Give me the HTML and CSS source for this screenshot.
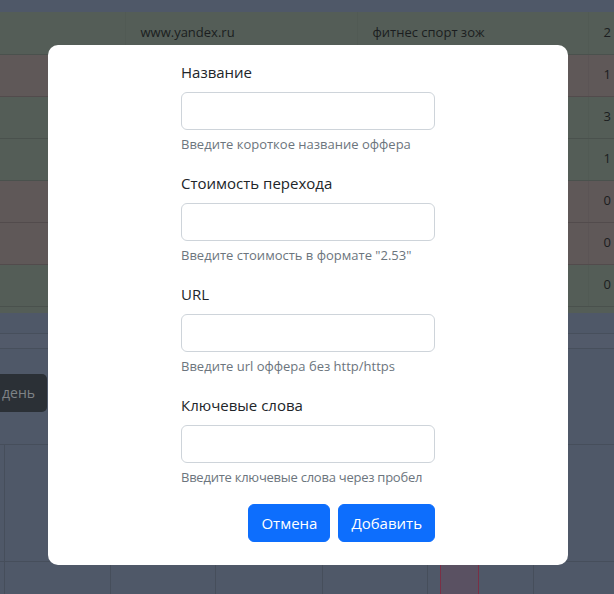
FILE: index.html
```html
<!DOCTYPE html>
<html lang="ru">
<head>
<meta charset="utf-8">
<title>Офферы</title>
<link rel="stylesheet" href="styles.css">
</head>
<body>
<div class="page">
  <div class="top-gap"></div>
  <table class="offers">
    <colgroup>
      <col class="c1"><col class="c2"><col class="c3"><col class="c4">
    </colgroup>
    <tbody>
      <tr class="ok"><td></td><td>www.yandex.ru</td><td>фитнес спорт зож</td><td>2</td></tr>
      <tr class="bad"><td></td><td></td><td></td><td>1</td></tr>
      <tr class="ok"><td></td><td></td><td></td><td>3</td></tr>
      <tr class="ok"><td></td><td></td><td></td><td>1</td></tr>
      <tr class="bad"><td></td><td></td><td></td><td>0</td></tr>
      <tr class="bad"><td></td><td></td><td></td><td>0</td></tr>
      <tr class="ok"><td></td><td></td><td></td><td>0</td></tr>
    </tbody>
  </table>
  <div class="foot-strip"></div>
  <div class="band-gap"></div>
  <div class="tabs-band"></div>
  <div class="toolbar"><button class="btn-dark" type="button">день</button></div>
  <div class="calendar">
    <div class="cal-cell"></div><div class="cal-cell"></div><div class="cal-cell"></div><div class="cal-cell"></div>
    <div class="cal-cell"></div><div class="cal-cell"></div><div class="cal-cell"></div>
    <div class="cal-cell"></div><div class="cal-cell"></div><div class="cal-cell"></div><div class="cal-cell"></div>
    <div class="cal-cell"></div><div class="cal-cell event-cell"><div class="event"></div></div><div class="cal-cell"></div>
  </div>
</div>

<div class="modal-wrap">
  <div class="modal">
    <form class="offer-form">
      <div class="field">
        <label class="field-label" for="f-name">Название</label>
        <input class="field-input" id="f-name" type="text">
        <div class="field-help">Введите короткое название оффера</div>
      </div>
      <div class="field">
        <label class="field-label" for="f-cost">Стоимость перехода</label>
        <input class="field-input" id="f-cost" type="text">
        <div class="field-help">Введите стоимость в формате "2.53"</div>
      </div>
      <div class="field">
        <label class="field-label" for="f-url">URL</label>
        <input class="field-input" id="f-url" type="text">
        <div class="field-help">Введите url оффера без http/https</div>
      </div>
      <div class="field">
        <label class="field-label" for="f-kw">Ключевые слова</label>
        <input class="field-input" id="f-kw" type="text">
        <div class="field-help field-help-tight">Введите ключевые слова через пробел</div>
      </div>
      <div class="actions">
        <button class="btn-primary" type="button">Отмена</button>
        <button class="btn-primary" type="submit">Добавить</button>
      </div>
    </form>
  </div>
</div>
</body>
</html>
```

FILE: styles.css
```css
* { box-sizing: border-box; }

html, body {
  margin: 0;
  padding: 0;
  height: 100%;
  overflow: hidden;
}

body {
  background: #4f5868;
  font-family: "Open Sans", "Noto Sans", sans-serif;
  font-size: 15px;
  line-height: 1.5;
  color: #212529;
}

.page {
  width: 640px;
}

.top-gap { height: 12px; }

.offers {
  width: 640px;
  border-collapse: collapse;
  table-layout: fixed;
  font-size: 13px;
  color: #1b1d20;
}
.offers .c1 { width: 125px; }
.offers .c2 { width: 232px; }
.offers .c3 { width: 231px; }
.offers .c4 { width: 52px; }

.offers td {
  height: 42px;
  padding: 0 15px;
  border-bottom: 1px solid #4a514d;
  vertical-align: middle;
  white-space: nowrap;
}
.offers tr.ok td { background: #545d57; }
.offers tr.ok td + td { border-left: 1px solid #515a54; }
.offers tr.bad td { background: #5f5858; border-bottom-color: #524b4c; }
.offers tr.bad td + td { border-left: 1px solid #5b5455; }

.foot-strip {
  height: 6px;
  background: #545d57;
}

.band-gap { height: 20px; }

.tabs-band {
  height: 16px;
  background: #525a6a;
  border-top: 1px solid #474f5c;
  border-bottom: 1px solid #474f5c;
}

.toolbar {
  display: flex;
  padding-top: 25px;
  height: 95px;
}

.btn-dark {
  height: 38px;
  padding: 0 12px 0 2px;
  border: 0;
  border-radius: 0 5px 5px 0;
  background: #2b3036;
  color: #7f8387;
  font-family: inherit;
  font-size: 14px;
}

.calendar {
  display: grid;
  width: 640px;
  grid-template-columns: 4px 106px 105px 107px 105px 106px 107px;
  grid-auto-rows: 117px;
  border-top: 1px solid #464e5b;
}

.cal-cell {
  border-left: 1px solid #464e5b;
  border-bottom: 1px solid #464e5b;
}
.calendar > .cal-cell:nth-child(7n+1) { border-left: 0; }

.event-cell {
  display: flex;
  padding-left: 12px;
}
.event {
  width: 39px;
  background: #5a5162;
  border-left: 1px solid #7a2f45;
  border-right: 1px solid #7a2f45;
}

/* modal */
.modal-wrap {
  position: fixed;
  inset: 0;
  padding: 45px 0 0 48px;
}

.modal {
  width: 520px;
  height: 520px;
  background: #fff;
  border-radius: 10px;
  padding: 15px 0 0;
  display: flex;
  justify-content: center;
}

.offer-form {
  width: 254px;
}

.field { margin-bottom: 16px; }

.field-label {
  display: block;
  margin-bottom: 8px;
  line-height: 24px;
  color: #212529;
}

.field-input {
  display: block;
  width: 100%;
  height: 38px;
  border: 1px solid #ced4da;
  border-radius: 6px;
  background: #fff;
  font: inherit;
  padding: 6px 12px;
}

.field-help {
  margin-top: 4px;
  font-size: 13px;
  line-height: 21px;
  color: #6c757d;
  white-space: nowrap;
}
.field-help-tight { letter-spacing: -0.25px; }

.actions {
  display: flex;
  justify-content: flex-end;
  gap: 8px;
}

.btn-primary {
  height: 38px;
  padding: 0 12px;
  border: 1px solid #0d6efd;
  border-radius: 6px;
  background: #0d6efd;
  color: #fff;
  font-family: inherit;
  font-size: 15px;
}
```
